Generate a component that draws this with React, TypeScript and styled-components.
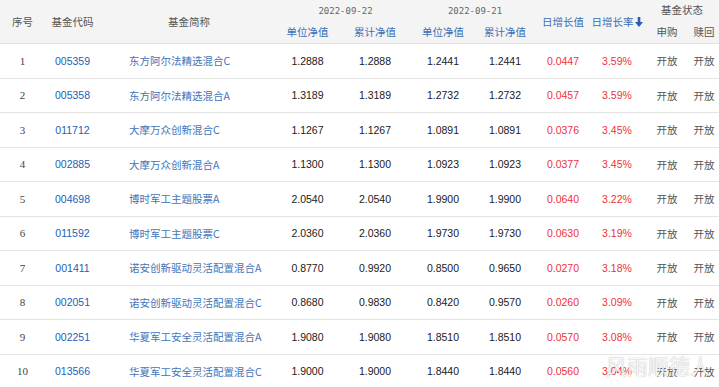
import React from 'react';
import styled, { createGlobalStyle } from 'styled-components';

const GlobalStyle = createGlobalStyle`
  html, body {
    margin: 0;
    padding: 0;
    background: #fff;
  }
  body {
    font-family: 'Noto Sans CJK SC', 'Liberation Sans', sans-serif;
  }
`;

const COLS = '45px 55px 178px 59px 76px 60px 64px 52px 56px 44px 30px';

const Page = styled.div`
  position: relative;
  width: 719px;
  height: 387px;
  overflow: hidden;
`;

const Header = styled.div`
  display: grid;
  grid-template-columns: ${COLS};
  grid-template-rows: 19px 24px;
  background: #f4f4f4;
  border-bottom: 1px solid #e2e2e2;
`;

const HeadCell = styled.div<{ $col: string; $row: string; $blue?: boolean }>`
  grid-column: ${(p) => p.$col};
  grid-row: ${(p) => p.$row};
  display: flex;
  align-items: center;
  justify-content: center;
  font-size: 10.5px;
  color: ${(p) => (p.$blue ? '#3b6fb6' : '#555')};
  white-space: nowrap;
`;

const DateLabel = styled.span`
  font-family: 'DejaVu Sans Mono', 'Liberation Mono', monospace;
  font-size: 9px;
  color: #666;
  padding-top: 2px;
`;

const Row = styled.div`
  display: grid;
  grid-template-columns: ${COLS};
  height: 34.5px;
  box-sizing: border-box;
  border-bottom: 1px solid #e4e4e4;
`;

const Cell = styled.div<{ $kind: 'seq' | 'code' | 'name' | 'num' | 'red' | 'state' }>`
  display: flex;
  align-items: center;
  justify-content: ${(p) => (p.$kind === 'name' ? 'flex-start' : 'center')};
  padding-left: ${(p) => (p.$kind === 'name' ? '29px' : '0')};
  white-space: nowrap;
  font-size: 10.5px;
  font-family: ${(p) =>
    p.$kind === 'seq'
      ? "'Liberation Serif', serif"
      : p.$kind === 'name' || p.$kind === 'state'
      ? "'Noto Sans CJK SC', sans-serif"
      : "'Liberation Sans', Arial, sans-serif"};
  color: ${(p) =>
    p.$kind === 'seq'
      ? '#444'
      : p.$kind === 'code'
      ? '#2460b4'
      : p.$kind === 'name'
      ? '#4274b9'
      : p.$kind === 'red'
      ? '#f0303b'
      : p.$kind === 'state'
      ? '#555'
      : '#1a1a1a'};
  font-size: ${(p) => (p.$kind === 'seq' ? '11px' : '10.5px')};
`;

const Watermark = styled.div`
  position: absolute;
  right: 8px;
  bottom: 7px;
  font-family: 'Noto Sans CJK SC', sans-serif;
  font-size: 21px;
  letter-spacing: 0px;
  color: rgba(255, 255, 255, 0.9);
  text-shadow: 0 0 1px rgba(90, 90, 90, 0.55);
  pointer-events: none;
`;

const SortArrow = () => (
  <svg width="8" height="10" viewBox="0 0 8 10" style={{ marginLeft: 1 }}>
    <rect x="2.7" y="0" width="2.6" height="5.5" fill="#2460b4" />
    <polygon points="0,5 8,5 4,10" fill="#2460b4" />
  </svg>
);

type Fund = {
  code: string;
  name: string;
  u1: string;
  a1: string;
  u2: string;
  a2: string;
  diff: string;
  rate: string;
};

const funds: Fund[] = [
  { code: '005359', name: '东方阿尔法精选混合C', u1: '1.2888', a1: '1.2888', u2: '1.2441', a2: '1.2441', diff: '0.0447', rate: '3.59%' },
  { code: '005358', name: '东方阿尔法精选混合A', u1: '1.3189', a1: '1.3189', u2: '1.2732', a2: '1.2732', diff: '0.0457', rate: '3.59%' },
  { code: '011712', name: '大摩万众创新混合C', u1: '1.1267', a1: '1.1267', u2: '1.0891', a2: '1.0891', diff: '0.0376', rate: '3.45%' },
  { code: '002885', name: '大摩万众创新混合A', u1: '1.1300', a1: '1.1300', u2: '1.0923', a2: '1.0923', diff: '0.0377', rate: '3.45%' },
  { code: '004698', name: '博时军工主题股票A', u1: '2.0540', a1: '2.0540', u2: '1.9900', a2: '1.9900', diff: '0.0640', rate: '3.22%' },
  { code: '011592', name: '博时军工主题股票C', u1: '2.0360', a1: '2.0360', u2: '1.9730', a2: '1.9730', diff: '0.0630', rate: '3.19%' },
  { code: '001411', name: '诺安创新驱动灵活配置混合A', u1: '0.8770', a1: '0.9920', u2: '0.8500', a2: '0.9650', diff: '0.0270', rate: '3.18%' },
  { code: '002051', name: '诺安创新驱动灵活配置混合C', u1: '0.8680', a1: '0.9830', u2: '0.8420', a2: '0.9570', diff: '0.0260', rate: '3.09%' },
  { code: '002251', name: '华夏军工安全灵活配置混合A', u1: '1.9080', a1: '1.9080', u2: '1.8510', a2: '1.8510', diff: '0.0570', rate: '3.08%' },
  { code: '013566', name: '华夏军工安全灵活配置混合C', u1: '1.9000', a1: '1.9000', u2: '1.8440', a2: '1.8440', diff: '0.0560', rate: '3.04%' },
];

const App = () => {
  return (
    <Page>
      <GlobalStyle />
      <Header>
        <HeadCell $col="1" $row="1 / 3">序号</HeadCell>
        <HeadCell $col="2" $row="1 / 3">基金代码</HeadCell>
        <HeadCell $col="3" $row="1 / 3">基金简称</HeadCell>
        <HeadCell $col="4 / 6" $row="1">
          <DateLabel>2022-09-22</DateLabel>
        </HeadCell>
        <HeadCell $col="4" $row="2" $blue>单位净值</HeadCell>
        <HeadCell $col="5" $row="2" $blue>累计净值</HeadCell>
        <HeadCell $col="6 / 8" $row="1">
          <DateLabel>2022-09-21</DateLabel>
        </HeadCell>
        <HeadCell $col="6" $row="2" $blue>单位净值</HeadCell>
        <HeadCell $col="7" $row="2" $blue>累计净值</HeadCell>
        <HeadCell $col="8" $row="1 / 3" $blue>日增长值</HeadCell>
        <HeadCell $col="9" $row="1 / 3" $blue>
          日增长率
          <SortArrow />
        </HeadCell>
        <HeadCell $col="10 / 12" $row="1">基金状态</HeadCell>
        <HeadCell $col="10" $row="2">申购</HeadCell>
        <HeadCell $col="11" $row="2">赎回</HeadCell>
      </Header>
      {funds.map((f, idx) => (
        <Row key={f.code}>
          <Cell $kind="seq">{idx + 1}</Cell>
          <Cell $kind="code">{f.code}</Cell>
          <Cell $kind="name">{f.name}</Cell>
          <Cell $kind="num">{f.u1}</Cell>
          <Cell $kind="num">{f.a1}</Cell>
          <Cell $kind="num">{f.u2}</Cell>
          <Cell $kind="num">{f.a2}</Cell>
          <Cell $kind="red">{f.diff}</Cell>
          <Cell $kind="red">{f.rate}</Cell>
          <Cell $kind="state">开放</Cell>
          <Cell $kind="state">开放</Cell>
        </Row>
      ))}
      <Watermark>风雨顺德人</Watermark>
    </Page>
  );
};

export default App;
